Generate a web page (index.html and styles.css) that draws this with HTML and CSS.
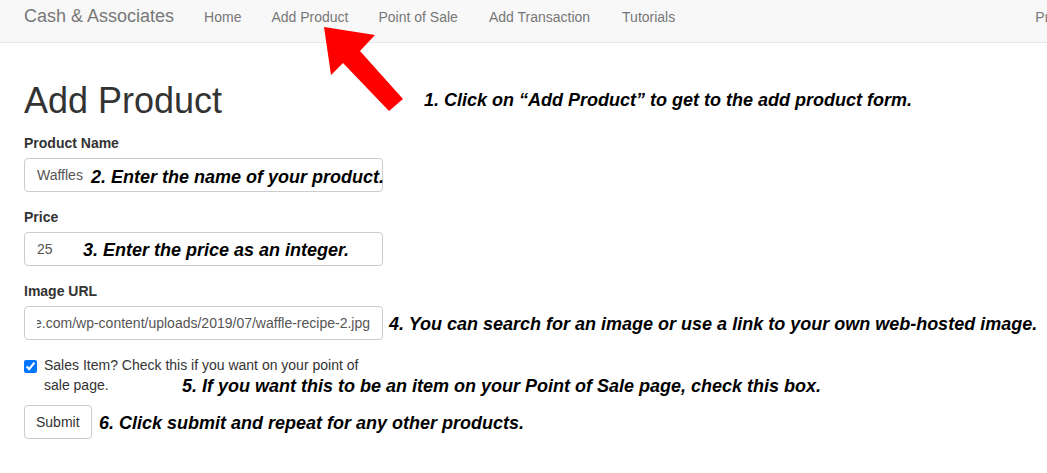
FILE: index.html
```html
<!DOCTYPE html>
<html lang="en">
<head>
<meta charset="utf-8">
<title>Add Product</title>
<link rel="stylesheet" href="styles.css">
</head>
<body>
<nav class="navbar">
  <div class="nav-inner">
    <a class="brand" href="#">Cash &amp; Associates</a>
    <a class="nav-link" href="#">Home</a>
    <a class="nav-link" href="#">Add Product</a>
    <a class="nav-link" href="#">Point of Sale</a>
    <a class="nav-link" href="#">Add Transaction</a>
    <a class="nav-link" href="#">Tutorials</a>
    <a class="nav-link nav-right" href="#">Profile</a>
  </div>
</nav>

<main class="main">
  <h1 class="title">Add Product</h1>
  <form class="form">
    <div class="form-group">
      <label class="label">Product Name</label>
      <div class="input">Waffles</div>
    </div>
    <div class="form-group">
      <label class="label">Price</label>
      <div class="input">25</div>
    </div>
    <div class="form-group">
      <label class="label">Image URL</label>
      <div class="input"><div class="scroll-text"><span>https://www.tasteofhome.com/wp-content/uploads/2019/07/waffle-recipe-2.jpg</span></div></div>
    </div>
    <div class="checkbox">
      <label class="check-label"><input type="checkbox" class="check" checked><span>Sales Item? Check this if you want on your point of sale page.</span></label>
    </div>
    <button type="button" class="btn">Submit</button>
  </form>

  <p class="note note-1">1. Click on “Add Product” to get to the add product form.</p>
  <p class="note note-2">2. Enter the name of your product.</p>
  <p class="note note-3">3. Enter the price as an integer.</p>
  <p class="note note-4">4. You can search for an image or use a link to your own web-hosted image.</p>
  <p class="note note-5">5. If you want this to be an item on your Point of Sale page, check this box.</p>
  <p class="note note-6">6. Click submit and repeat for any other products.</p>
</main>

<svg class="arrow" width="1047" height="140" viewBox="0 0 1047 140" aria-hidden="true">
  <polygon points="324,27 375,35 360,51 403,99 389,111 343,63 331,75" fill="#ff0000"/>
</svg>
</body>
</html>
```

FILE: styles.css
```css
* { box-sizing: border-box; }

html, body {
  margin: 0;
  padding: 0;
  background: #fff;
  font-family: "Liberation Sans", Arial, sans-serif;
  font-size: 14px;
  line-height: 20px;
  color: #333;
  overflow: hidden;
}

.navbar {
  height: 43px;
  background: #f8f8f8;
  border-bottom: 1px solid #e7e7e7;
  overflow: hidden;
}

.nav-inner {
  width: 1090px;
  display: flex;
  align-items: baseline;
  padding-top: 6px;
}

.brand {
  font-size: 18px;
  line-height: 20px;
  color: #777;
  text-decoration: none;
  padding: 0 15px 0 24px;
}

.nav-link {
  font-size: 14px;
  line-height: 20px;
  color: #777;
  text-decoration: none;
  padding: 0 15px;
  flex: none;
}

.nav-link:nth-child(6) { padding-left: 17px; }
.nav-link:nth-child(5) { padding-left: 16px; }

.nav-right { margin-left: auto; }

.main {
  position: relative;
  display: flow-root;
  padding: 0 24px;
}

.title {
  margin: 38px 0 12px;
  font-size: 36px;
  line-height: 40px;
  font-weight: 500;
  color: #333;
}

.form { width: 359px; }

.form-group { margin-bottom: 15px; }

.label {
  display: block;
  font-weight: bold;
  margin-bottom: 5px;
}

.input {
  height: 34px;
  padding: 6px 12px;
  border: 1px solid #ccc;
  border-radius: 4px;
  color: #555;
  font-size: 14px;
  line-height: 20px;
  white-space: nowrap;
  overflow: hidden;
}

.scroll-text {
  display: flex;
  justify-content: flex-end;
  overflow: hidden;
}

.scroll-text span { flex: none; }

.checkbox { margin-bottom: 10px; }

.check-label {
  display: flex;
  align-items: flex-start;
  font-weight: normal;
  color: #333;
}

.check {
  width: 13px;
  height: 13px;
  margin: 5px 7px 0 0;
  flex: none;
}

.btn {
  height: 34px;
  padding: 0 11px;
  font-family: "Liberation Sans", Arial, sans-serif;
  font-size: 14px;
  line-height: 20px;
  color: #333;
  background: #fff;
  border: 1px solid #ccc;
  border-radius: 4px;
}

.note {
  position: absolute;
  margin: 0;
  white-space: nowrap;
  font-size: 18px;
  line-height: 20px;
  font-weight: bold;
  font-style: italic;
  color: #000;
}

.note-1 { top: 46.5px; left: 424px; }
.note-2 { top: 123.5px; left: 91px; }
.note-3 { top: 196.5px; left: 83px; }
.note-4 { top: 270.5px; left: 389px; }
.note-5 { top: 333px; left: 182px; }
.note-6 { top: 369.5px; left: 99px; }

.arrow {
  position: absolute;
  top: 0;
  left: 0;
  pointer-events: none;
}
```
